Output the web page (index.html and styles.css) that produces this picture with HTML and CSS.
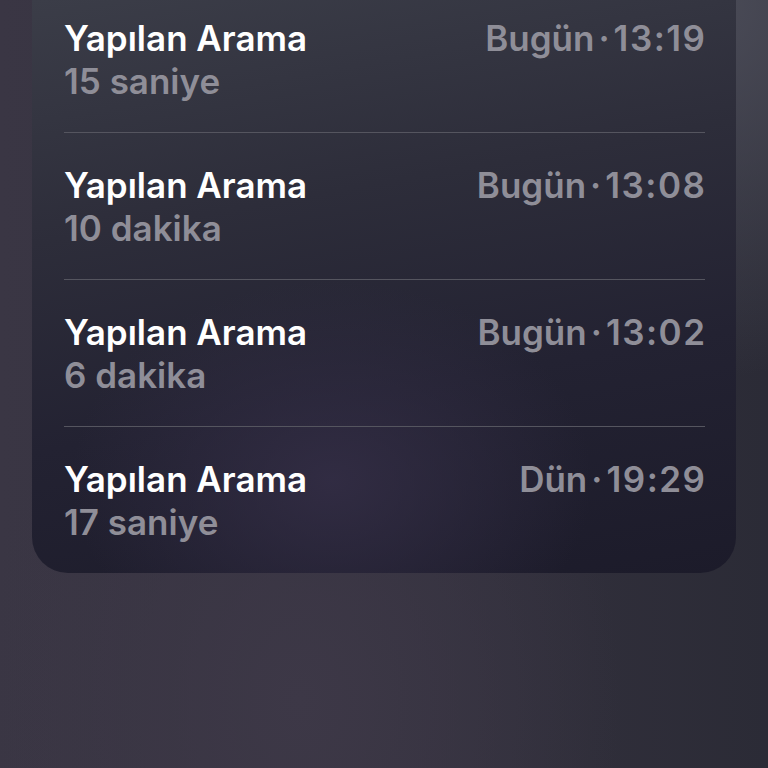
FILE: index.html
```html
<!DOCTYPE html>
<html lang="tr">
<head>
<meta charset="utf-8">
<link rel="stylesheet" href="styles.css">
</head>
<body>
<div class="screen">
  <div class="card">
    <div class="row first">
      <div class="left">
        <div class="title">Yapılan Arama</div>
        <div class="sub">15 saniye</div>
      </div>
      <div class="when">Bugün<span class="dot">·</span><span class="time">13:19</span></div>
    </div>
    <div class="row">
      <div class="left">
        <div class="title">Yapılan Arama</div>
        <div class="sub">10 dakika</div>
      </div>
      <div class="when">Bugün<span class="dot">·</span><span class="time">13:08</span></div>
    </div>
    <div class="row">
      <div class="left">
        <div class="title">Yapılan Arama</div>
        <div class="sub">6 dakika</div>
      </div>
      <div class="when">Bugün<span class="dot">·</span><span class="time">13:02</span></div>
    </div>
    <div class="row last">
      <div class="left">
        <div class="title">Yapılan Arama</div>
        <div class="sub">17 saniye</div>
      </div>
      <div class="when">Dün<span class="dot">·</span><span class="time">19:29</span></div>
    </div>
  </div>
</div>
</body>
</html>
```
FILE: styles.css
```css
html, body {
  margin: 0;
  padding: 0;
  width: 768px;
  height: 768px;
  overflow: hidden;
}
body {
  background:
    radial-gradient(ellipse 420px 380px at 680px 0px, #4c4d59 0%, rgba(76,77,89,0) 100%),
    radial-gradient(ellipse 320px 420px at 300px 700px, #3d3847 0%, rgba(61,56,71,0) 100%),
    linear-gradient(90deg, #3a3644 0%, #35323f 45%, #2b2b36 100%);
  font-family: Inter, "Noto Sans", sans-serif;
  -webkit-font-smoothing: antialiased;
}
.screen {
  padding: 0 32px;
}
.card {
  border-radius: 0 0 36px 36px;
  padding: 0 31px 0 32px;
  background:
    radial-gradient(ellipse 260px 200px at 300px 480px, rgba(52,46,70,0.85) 0%, rgba(52,46,70,0) 100%),
    linear-gradient(170deg, #3b3d48 0%, #2d2d3a 35%, #232232 65%, #1c1b2a 100%);
}
.row {
  display: flex;
  justify-content: space-between;
  align-items: flex-start;
  padding: 31px 0 29px;
  border-bottom: 1px solid #55555f;
}
.row.first {
  padding-top: 17px;
}
.row.last {
  border-bottom: none;
}
.title, .sub, .when {
  font-size: 35px;
  line-height: 43px;
  font-weight: 600;
  letter-spacing: 0;
}
.title {
  color: #ffffff;
}
.sub {
  color: #8f8e98;
}
.when {
  color: #8f8e98;
  white-space: nowrap;
}
.time {
  letter-spacing: 1.5px;
  margin-right: -1.5px;
}
.dot {
  margin: 0 4px;
}
```
